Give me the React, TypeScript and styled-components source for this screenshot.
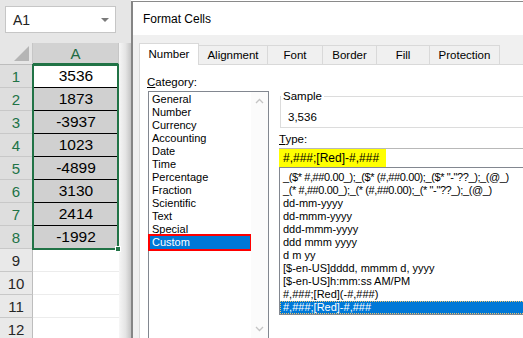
import React from 'react';
import styled, { createGlobalStyle } from 'styled-components';

const GlobalStyle = createGlobalStyle`
  *, *::before, *::after { box-sizing: border-box; }
  html, body { margin: 0; padding: 0; }
  body {
    width: 523px;
    height: 338px;
    overflow: hidden;
    background: #fff;
    font-family: "Liberation Sans", Arial, sans-serif;
    color: #000;
  }
`;

const Root = styled.div`
  display: flex;
  width: 523px;
  height: 338px;
  overflow: hidden;
`;

/* ---------- Spreadsheet ---------- */
const Sheet = styled.div`
  width: 131px;
  flex: none;
  display: flex;
  flex-direction: column;
  background: #e6e6e6;
`;

const NameBar = styled.div`
  height: 43px;
  flex: none;
  padding: 6px 0 0 5px;
`;

const NameBox = styled.div`
  width: 111px;
  height: 27px;
  background: #fff;
  border: 1px solid #c6c6c6;
  display: flex;
  align-items: center;
  justify-content: space-between;
  padding: 0 6px 0 7px;
  font-size: 14px;
  color: #222;
`;

const DropArrow = styled.span`
  width: 0;
  height: 0;
  border-left: 4px solid transparent;
  border-right: 4px solid transparent;
  border-top: 4px solid #7a7a7a;
`;

const SheetBody = styled.div`
  flex: 1;
  display: flex;
`;

const Grid = styled.div`
  width: 119px;
  flex: none;
  display: grid;
  grid-template-columns: 33px 86px;
  grid-template-rows: 22px repeat(12, 23px);
  background: #fff;
`;

const Corner = styled.div`
  grid-column: 1;
  grid-row: 1;
  background: #e6e6e6;
  border-right: 1px solid #c6c6c6;
  border-bottom: 1px solid #bdbdbd;
  display: flex;
  align-items: flex-end;
  justify-content: flex-end;
  padding: 0 3px 3px 0;
`;

const CornerTriangle = styled.span`
  width: 0;
  height: 0;
  border-left: 15px solid transparent;
  border-bottom: 15px solid #b5b5b5;
`;

const ColHeader = styled.div`
  grid-column: 2;
  grid-row: 1;
  background: #d2d2d2;
  border-bottom: 2px solid #217346;
  border-right: 1px solid #c6c6c6;
  color: #1d6a42;
  font-size: 15px;
  display: flex;
  align-items: center;
  justify-content: center;
  padding-top: 1px;
`;

const RowHeader = styled.div<{ $sel?: boolean; $row: number }>`
  grid-column: 1;
  grid-row: ${(p) => p.$row};
  background: ${(p) => (p.$sel ? '#dedede' : '#e9e9e9')};
  color: ${(p) => (p.$sel ? '#217346' : '#262626')};
  border-bottom: 1px solid #c8c8c8;
  border-right: 1px solid #bdbdbd;
  font-size: 15px;
  display: flex;
  align-items: center;
  justify-content: center;
`;

const DataCell = styled.div<{ $shade?: boolean; $ruled?: boolean; $row: number }>`
  grid-column: 2;
  grid-row: ${(p) => p.$row};
  background: ${(p) => (p.$shade ? '#d0d0d0' : '#fff')};
  border-bottom: 1px solid ${(p) => (p.$ruled ? '#000' : '#ececec')};
  font-size: 15.5px;
  display: flex;
  align-items: center;
  justify-content: center;
`;

const SelectionFrame = styled.div`
  grid-column: 2;
  grid-row: 2 / 10;
  margin: -1px 0 -1px -1px;
  border: 2px solid #217346;
  position: relative;
  z-index: 2;
  pointer-events: none;
`;

const FillHandle = styled.span`
  position: absolute;
  right: -4px;
  bottom: -4px;
  width: 6px;
  height: 6px;
  background: #217346;
  border: 1px solid #fff;
`;

const Shade = styled.div`
  flex: 1;
  background: linear-gradient(to right, #f6f6f6 0%, #e4e4e4 55%, #c4c4c4 100%);
`;

/* ---------- Dialog ---------- */
const Dialog = styled.div`
  width: 520px;
  flex: none;
  margin-top: 1px;
  border-top: 1px solid #8a8a8a;
  border-left: 2px solid #858585;
  background: #f0f0f0;
  display: flex;
  flex-direction: column;
`;

const TitleBar = styled.div`
  height: 33px;
  flex: none;
  background: #fff;
  padding: 1px 0 0 10px;
  display: flex;
  align-items: center;
  font-size: 12px;
`;

const DialogBody = styled.div`
  flex: 1;
  padding: 8px 0 0 6px;
  display: flex;
  flex-direction: column;
`;

const Tabs = styled.div`
  display: flex;
  align-items: flex-end;
  height: 21px;
  position: relative;
  z-index: 1;
`;

const Tab = styled.div<{ $w: number; $active?: boolean }>`
  width: ${(p) => p.$w}px;
  height: ${(p) => (p.$active ? 22 : 19)}px;
  margin-bottom: ${(p) => (p.$active ? -1 : 0)}px;
  background: ${(p) => (p.$active ? '#fff' : '#f0f0f0')};
  border-top: 1px solid #d9d9d9;
  border-right: 1px solid #d9d9d9;
  border-left: ${(p) => (p.$active ? '1px solid #d9d9d9' : 'none')};
  font-size: 11.5px;
  display: flex;
  justify-content: center;
  padding-top: ${(p) => (p.$active ? 4 : 3)}px;
`;

const Panel = styled.div`
  flex: 1;
  background: #fff;
  border: 1px solid #d9d9d9;
  border-right: none;
  display: flex;
  padding: 10px 0 0 7px;
`;

const CategoryCol = styled.div`
  width: 122px;
  flex: none;
  display: flex;
  flex-direction: column;
`;

const FieldLabel = styled.div`
  font-size: 11.5px;
  line-height: 14px;
  height: 14px;
  u { text-decoration: underline; }
`;

const ListBox = styled.div`
  margin: 2px 0 0 1px;
  width: 121px;
  height: 248px;
  border: 1px solid #828790;
  display: flex;
`;

const ListItems = styled.div`
  flex: 1;
  padding-top: 1px;
  display: flex;
  flex-direction: column;
`;

const CatItem = styled.div<{ $sel?: boolean }>`
  height: 13px;
  line-height: 13px;
  font-size: 11px;
  white-space: nowrap;
  padding-left: ${(p) => (p.$sel ? 2 : 3)}px;
  margin-left: ${(p) => (p.$sel ? 1 : 0)}px;
  width: ${(p) => (p.$sel ? '100px' : 'auto')};
  background: ${(p) => (p.$sel ? '#0078d7' : 'transparent')};
  color: ${(p) => (p.$sel ? '#fff' : '#000')};
  outline: ${(p) => (p.$sel ? '2px solid #ff0000' : 'none')};
`;

const ScrollBar = styled.div`
  width: 17px;
  flex: none;
  background: #fbfbfb;
  display: flex;
  flex-direction: column;
  justify-content: space-between;
  align-items: center;
  padding: 6px 0 6px;
`;

const RightCol = styled.div`
  flex: 1;
  margin-left: 10px;
  display: flex;
  flex-direction: column;
  min-width: 0;
`;

const Group = styled.fieldset`
  margin: 14px 0 0 1px;
  padding: 0 0 3px 0;
  border: 1px solid #dcdcdc;
  border-right: none;
  min-width: 0;
`;

const Legend = styled.legend`
  padding: 0 2px;
  margin-left: 0;
  font-size: 11.5px;
  line-height: 14px;
`;

const SampleValue = styled.div`
  padding: 7px 0 0 7px;
  font-size: 11.5px;
  line-height: 14px;
`;

const TypeLabel = styled(FieldLabel)`
  margin-top: 4px;
`;

const TypeInput = styled.div`
  margin-top: 2px;
  height: 19px;
  border-top: 1px solid #b8b8b8;
  display: flex;
`;

const Highlight = styled.span`
  background: #ffff00;
  font-size: 12px;
  display: flex;
  align-items: center;
  padding: 0 7px 0 4px;
  white-space: nowrap;
`;

const TypeList = styled.div`
  height: 148px;
  border: 1px solid #828790;
  border-right: none;
  padding-top: 3px;
  display: flex;
  flex-direction: column;
`;

const TypeItem = styled.div<{ $sel?: boolean; $tight?: boolean }>`
  height: 13px;
  line-height: 13px;
  font-size: 11px;
  letter-spacing: ${(p) => (p.$tight ? '-0.4px' : 'normal')};
  white-space: nowrap;
  padding-left: 3px;
  background: ${(p) => (p.$sel ? '#0078d7' : 'transparent')};
  color: ${(p) => (p.$sel ? '#fff' : '#000')};
  outline: ${(p) => (p.$sel ? '1px dotted #f3c46a' : 'none')};
  outline-offset: -1px;
`;

const Chevron = ({ up }: { up?: boolean }) => (
  <svg width="9" height="6" viewBox="0 0 9 6">
    <polyline
      points={up ? '1,5 4.5,1.5 8,5' : '1,1 4.5,4.5 8,1'}
      fill="none"
      stroke="#c4c4c4"
      strokeWidth="1.3"
    />
  </svg>
);

const values = ['3536', '1873', '-3937', '1023', '-4899', '3130', '2414', '-1992'];

const tabs: { label: string; w: number }[] = [
  { label: 'Number', w: 60 },
  { label: 'Alignment', w: 69 },
  { label: 'Font', w: 55 },
  { label: 'Border', w: 54 },
  { label: 'Fill', w: 53 },
  { label: 'Protection', w: 70 },
];

const categories = [
  'General',
  'Number',
  'Currency',
  'Accounting',
  'Date',
  'Time',
  'Percentage',
  'Fraction',
  'Scientific',
  'Text',
  'Special',
  'Custom',
];

const types = [
  '_($* #,##0.00_);_($* (#,##0.00);_($* "-"??_);_(@_)',
  '_(* #,##0.00_);_(* (#,##0.00);_(* "-"??_);_(@_)',
  'dd-mm-yyyy',
  'dd-mmm-yyyy',
  'ddd-mmm-yyyy',
  'ddd mmm yyyy',
  'd m yy',
  '[$-en-US]dddd, mmmm d, yyyy',
  '[$-en-US]h:mm:ss AM/PM',
  '#,###;[Red](-#,###)',
  '#,###;[Red]-#,###',
];

export default function App() {
  return (
    <>
      <GlobalStyle />
      <Root>
        <Sheet>
          <NameBar>
            <NameBox>
              <span>A1</span>
              <DropArrow />
            </NameBox>
          </NameBar>
          <SheetBody>
            <Grid>
              <Corner>
                <CornerTriangle />
              </Corner>
              <ColHeader>A</ColHeader>
              {Array.from({ length: 12 }, (_, i) => {
                const inData = i < values.length;
                return (
                  <React.Fragment key={i}>
                    <RowHeader $row={i + 2} $sel={inData}>
                      {i + 1}
                    </RowHeader>
                    <DataCell $row={i + 2} $shade={inData && i > 0} $ruled={inData}>
                      {inData ? values[i] : ''}
                    </DataCell>
                  </React.Fragment>
                );
              })}
              <SelectionFrame>
                <FillHandle />
              </SelectionFrame>
            </Grid>
            <Shade />
          </SheetBody>
        </Sheet>

        <Dialog>
          <TitleBar>Format Cells</TitleBar>
          <DialogBody>
            <Tabs>
              {tabs.map((t, i) => (
                <Tab key={t.label} $w={t.w} $active={i === 0}>
                  {t.label}
                </Tab>
              ))}
            </Tabs>
            <Panel>
              <CategoryCol>
                <FieldLabel>
                  <u>C</u>ategory:
                </FieldLabel>
                <ListBox>
                  <ListItems>
                    {categories.map((c) => (
                      <CatItem key={c} $sel={c === 'Custom'}>
                        {c}
                      </CatItem>
                    ))}
                  </ListItems>
                  <ScrollBar>
                    <Chevron up />
                    <Chevron />
                  </ScrollBar>
                </ListBox>
              </CategoryCol>
              <RightCol>
                <Group>
                  <Legend>Sample</Legend>
                  <SampleValue>3,536</SampleValue>
                </Group>
                <TypeLabel>
                  <u>T</u>ype:
                </TypeLabel>
                <TypeInput>
                  <Highlight>#,###;[Red]-#,###</Highlight>
                </TypeInput>
                <TypeList>
                  {types.map((t, i) => (
                    <TypeItem
                      key={t}
                      $sel={i === types.length - 1}
                      $tight={t.length > 40}
                    >
                      {t}
                    </TypeItem>
                  ))}
                </TypeList>
              </RightCol>
            </Panel>
          </DialogBody>
        </Dialog>
      </Root>
    </>
  );
}
